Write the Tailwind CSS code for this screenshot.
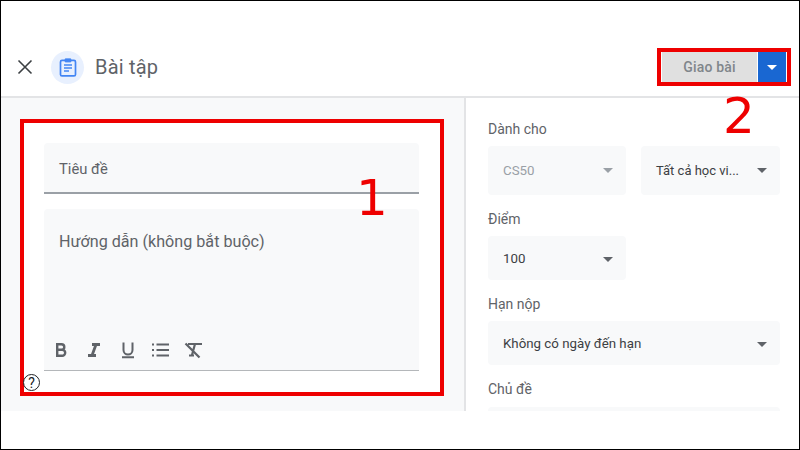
<!DOCTYPE html>
<html lang="vi">
<head>
    <meta charset="UTF-8">
    <title>Bài tập</title>
    <script src="https://cdn.jsdelivr.net/npm/@tailwindcss/browser@4"></script>
</head>
<body class="bg-white font-['Roboto',sans-serif]">
    <div class="relative w-[800px] h-[450px] overflow-hidden border border-black bg-white flex flex-col">

        <!-- Header -->
        <header class="h-[97px] shrink-0 flex items-end border-b-2 border-[#e3e4e6]">
            <div class="h-[58px] w-full flex items-center">
                <svg class="ml-[14px] w-[20px] h-[20px] text-[#3c4043]" viewBox="0 0 20 20" fill="none" stroke="currentColor" stroke-width="1.6"><path d="M3.5 3.5l13 13M16.5 3.5l-13 13"/></svg>
                <div class="ml-[16px] w-[33px] h-[33px] rounded-full bg-[#e8f0fe] flex items-center justify-center">
                    <svg class="w-[20px] h-[20px] text-[#4285f4]" viewBox="0 0 20 20" fill="none" stroke="currentColor" stroke-width="1.7"><rect x="2.500" y="3.400" width="15" height="15.500" rx="1.500"/><path d="M7.200 1.900h5.600v3H7.200z" fill="currentColor" stroke-width="1"/><path d="M6 8h8M6 11h8M6 14h5"/></svg>
                </div>
                <span class="ml-[11px] text-[20px] text-[#5f6368] tracking-[0.2px]">Bài tập</span>
                <div class="ml-auto mr-[13px] flex h-[30px] w-[124px]">
                    <div class="w-[95px] bg-[#e0e0e0] text-[#80868b] text-[14px] font-medium flex items-center justify-center tracking-[0.2px]">Giao bài</div>
                    <div class="w-[1px] bg-white"></div>
                    <div class="flex-1 bg-[#1967d2] flex items-center justify-center">
                        <div class="w-0 h-0 border-l-[5px] border-r-[5px] border-t-[5px] border-l-transparent border-r-transparent border-t-white"></div>
                    </div>
                </div>
            </div>
        </header>

        <main class="h-[313px] shrink-0 flex overflow-hidden">
            <!-- Left: title and instructions -->
            <section class="w-[463px] shrink-0 bg-[#f8f9fa] pt-[21px] pl-[19px]">
                <div class="w-[423px] h-[276px] bg-white pt-[24px] px-[24px]">
                    <div class="h-[51px] bg-[#f8f9fa] rounded-t-[4px] border-b-2 border-[#9aa0a6] pl-[15px] pt-[15px] text-[14.8px] text-[#5f6368]">Tiêu đề</div>
                    <div class="mt-[15px] h-[162px] bg-[#f8f9fa] rounded-t-[4px] border-b border-[#b4b7ba] flex flex-col">
                        <div class="pl-[15px] pt-[21px] text-[16.15px] text-[#5f6368]">Hướng dẫn (không bắt buộc)</div>
                        <div class="mt-auto mb-[10px] pl-[7px] flex items-center gap-[13px] text-[#5f6368]">
                            <svg class="w-[20px] h-[20px]" viewBox="0 0 20 20" fill="none" stroke="currentColor" stroke-width="2.400"><path d="M6.200 4.200h4.300a2.800 2.800 0 010 5.600H6.200zM6.200 9.800h5a3 3 0 010 6H6.200z"/></svg>
                            <svg class="w-[20px] h-[20px]" viewBox="0 0 20 20" fill="none" stroke="currentColor" stroke-width="2.800"><path d="M8 4.500h8M4 15.500h8M12 4.500l-4 11"/></svg>
                            <svg class="w-[20px] h-[20px]" viewBox="0 0 20 20" fill="none" stroke="currentColor" stroke-width="2"><path d="M6.500 2.500v7.500a4.500 4.500 0 009 0V2.500M5 17.200h12"/></svg>
                            <svg class="w-[20px] h-[20px]" viewBox="0 0 20 20" fill="none" stroke="currentColor" stroke-width="1.800"><path d="M6.500 4.500H19M6.500 10H19M6.500 15.500H19M2 4.500h2M2 10h2M2 15.500h2"/></svg>
                            <svg class="w-[20px] h-[20px]" viewBox="0 0 20 20" fill="none" stroke="currentColor" stroke-width="2.200"><path d="M5 4h14M12 4l-3 11M6 15.500h5M2.500 3.500l14 14"/></svg>
                        </div>
                    </div>
                </div>
            </section>

            <div class="w-[2px] bg-[#e3e4e6]"></div>

            <!-- Right: settings -->
            <aside class="flex-1 bg-white pl-[22px] text-[#3c4043] text-[13.3px]">
                <div class="pt-[21px] text-[14px] text-[#5f6368] h-[48px]">Dành cho</div>
                <div class="flex gap-[15px]">
                    <div class="w-[138px] h-[49px] rounded-[4px] bg-[#f8f9fa] flex items-center justify-between pl-[15px] pr-[13px] text-[#9aa0a6]">CS50<div class="w-0 h-0 border-l-[5px] border-r-[5px] border-t-[5px] border-l-transparent border-r-transparent border-t-[#9aa0a6]"></div></div>
                    <div class="w-[139px] h-[49px] rounded-[4px] bg-[#f8f9fa] flex items-center justify-between pl-[15px] pr-[13px] text-[13px]">Tất cả học vi...<div class="w-0 h-0 border-l-[5px] border-r-[5px] border-t-[5px] border-l-transparent border-r-transparent border-t-[#5f6368]"></div></div>
                </div>
                <div class="pt-[14px] h-[41px] text-[14px] text-[#5f6368]">Điểm</div>
                <div class="w-[138px] h-[44px] pt-[2px] rounded-[4px] bg-[#f8f9fa] flex items-center justify-between pl-[15px] pr-[13px]">100<div class="w-0 h-0 border-l-[5px] border-r-[5px] border-t-[5px] border-l-transparent border-r-transparent border-t-[#5f6368]"></div></div>
                <div class="pt-[14px] h-[41px] text-[14px] text-[#5f6368]">Hạn nộp</div>
                <div class="w-[292px] h-[44px] pt-[2px] rounded-[4px] bg-[#f8f9fa] flex items-center justify-between pl-[15px] pr-[13px]">Không có ngày đến hạn<div class="w-0 h-0 border-l-[5px] border-r-[5px] border-t-[5px] border-l-transparent border-r-transparent border-t-[#5f6368]"></div></div>
                <div class="pt-[14px] h-[42px] text-[14px] text-[#5f6368]">Chủ đề</div>
                <div class="w-[292px] h-[44px] rounded-[4px] bg-[#f8f9fa]"></div>
            </aside>
        </main>

        <!-- Annotations over the screenshot -->
        <div class="absolute left-[19px] top-[118px] w-[424px] h-[277px] border-[4px] border-[#ee0000]"></div>
        <div class="absolute left-[656px] top-[47px] w-[134px] h-[38px] border-[4px] border-[#ee0000]"></div>
        <span class="absolute left-[355px] top-[167px] text-[50px] leading-[60px] text-[#ee0000] font-['DejaVu_Sans',sans-serif]">1</span>
        <span class="absolute left-[722px] top-[85px] text-[50px] leading-[60px] text-[#ee0000] font-['DejaVu_Sans',sans-serif]">2</span>
        <div class="absolute left-[22px] top-[373px] w-[17px] h-[17px] rounded-full border-[1.5px] border-[#202124] bg-white flex items-center justify-center text-[14px] leading-none text-[#202124]">?</div>
    </div>
</body>
</html>
